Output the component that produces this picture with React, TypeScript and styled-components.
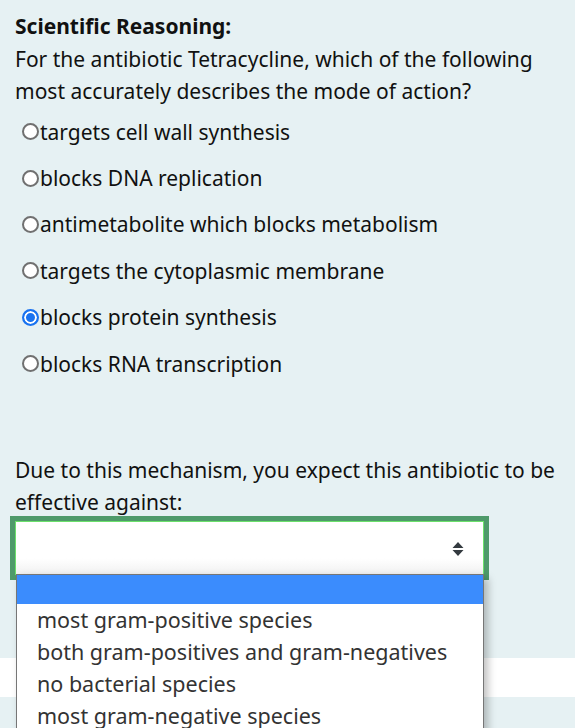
import * as React from 'react';
import styled, { createGlobalStyle } from 'styled-components';

const GlobalStyle = createGlobalStyle`
  html, body {
    margin: 0;
    padding: 0;
    background: #e6f1f3;
  }
  body {
    font-family: 'Noto Sans', 'Open Sans', sans-serif;
    color: #111;
    overflow: hidden;
  }
`;

const choices = [
  'targets cell wall synthesis',
  'blocks DNA replication',
  'antimetabolite which blocks metabolism',
  'targets the cytoplasmic membrane',
  'blocks protein synthesis',
  'blocks RNA transcription',
];

const effects = [
  'most gram-positive species',
  'both gram-positives and gram-negatives',
  'no bacterial species',
  'most gram-negative species',
];

const App = () => {
  const [picked, setPicked] = React.useState(4);
  return (
    <Page>
      <GlobalStyle />
      <Panel>
        <Heading>Scientific Reasoning:</Heading>
        <Prompt>
          For the antibiotic Tetracycline, which of the following most accurately describes the
          mode of action?
        </Prompt>
        <ChoiceList>
          {choices.map((c, i) => (
            <Choice key={c}>
              <Radio
                type="radio"
                name="mode"
                checked={picked === i}
                onChange={() => setPicked(i)}
              />
              {c}
            </Choice>
          ))}
        </ChoiceList>
        <Prompt $top={67}>Due to this mechanism, you expect this antibiotic to be effective against:</Prompt>
        <SelectWrap>
          <SelectBox>
            <ArrowIcon width="12" height="16" viewBox="0 0 12 16">
              <path d="M6 1 L11.5 7 H0.5 Z M0.5 9 H11.5 L6 15 Z" fill="#343a40" />
            </ArrowIcon>
          </SelectBox>
          <Menu>
            <MenuItem $active />
            {effects.map((e) => (
              <MenuItem key={e}>{e}</MenuItem>
            ))}
          </Menu>
        </SelectWrap>
      </Panel>
      <Band />
      <Panel $fill />
    </Page>
  );
};

export default App;

const Page = styled.div`
  width: 575px;
  height: 728px;
  overflow: hidden;
  display: flex;
  flex-direction: column;
`;

const Panel = styled.div<{ $fill?: boolean }>`
  background: #e6f1f3;
  padding: ${(p) => (p.$fill ? '0' : '10px 15px 0')};
  height: ${(p) => (p.$fill ? 'auto' : '658px')};
  flex: ${(p) => (p.$fill ? '1' : 'none')};
  box-sizing: border-box;
  position: relative;
  z-index: ${(p) => (p.$fill ? 0 : 2)};
`;

const Band = styled.div`
  height: 39px;
  flex: none;
  background: #fff;
`;

const Heading = styled.div`
  font-weight: 700;
  font-size: 21px;
  line-height: 32.5px;
`;

const Prompt = styled.div<{ $top?: number }>`
  font-size: 21px;
  line-height: 32.5px;
  margin-top: ${(p) => p.$top || 0}px;
`;

const ChoiceList = styled.div`
  display: flex;
  flex-direction: column;
  margin-top: 1px;
`;

const Choice = styled.label`
  display: flex;
  align-items: center;
  height: 46.4px;
  font-size: 21px;
  padding-left: 7px;
`;

const Radio = styled.input`
  appearance: none;
  width: 17px;
  height: 17px;
  margin: 0 1px 0 0;
  border-radius: 50%;
  border: 2px solid #707070;
  background: #fff;
  box-sizing: border-box;

  &:checked {
    border: 2px solid #1a73f0;
    background: #1a73f0;
    box-shadow: inset 0 0 0 2px #fff;
  }
`;

const SelectWrap = styled.div`
  position: relative;
  margin-top: 2px;
`;

const SelectBox = styled.div`
  height: 54px;
  border: 1px solid #6be06b;
  outline: 5px solid #4e9a6a;
  background: linear-gradient(#fff 70%, #f1f1f1);
  display: flex;
  align-items: center;
  justify-content: flex-end;
  padding-right: 19px;
  box-sizing: border-box;
  width: 469px;
`;

const ArrowIcon = styled.svg`
  display: block;
  margin-top: 3px;
`;

const Menu = styled.div`
  position: absolute;
  top: 53px;
  left: 1px;
  width: 468px;
  background: #fff;
  border: 1px solid #767676;
  box-sizing: border-box;
  box-shadow: 4px 4px 8px rgba(0, 0, 0, 0.25);
  z-index: 5;
`;

const MenuItem = styled.div<{ $active?: boolean }>`
  height: ${(p) => (p.$active ? '29px' : '32px')};
  margin-bottom: ${(p) => (p.$active ? '0' : '0')};
  background: ${(p) => (p.$active ? '#3b8cfd' : '#fff')};
  color: #333;
  font-size: 21.5px;
  line-height: 32px;
  padding-left: 20px;
  white-space: nowrap;
`;
